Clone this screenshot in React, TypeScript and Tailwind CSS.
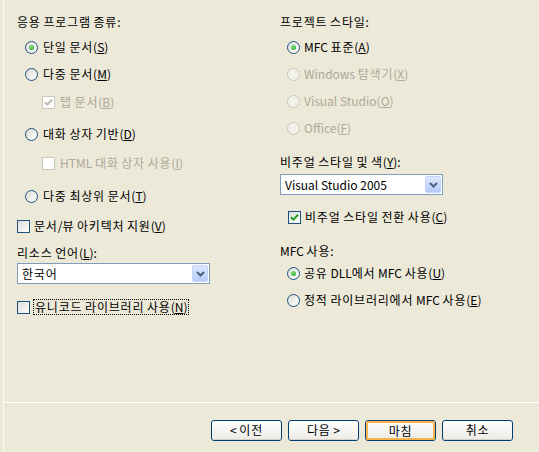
import React from "react";

const FONT = "font-['Noto_Sans_CJK_KR','Noto_Sans',sans-serif]";

// Hangul in the original font runs a little wider than Noto CJK, so loosen just those runs
function T({ s }: { s: string }) {
  const parts = s.split(/([\uAC00-\uD7A3]+)/);
  return (
    <span>
      {parts.map((p, i) =>
        /[\uAC00-\uD7A3]/.test(p) ? (
          <span key={i} className="tracking-[0.8px]">
            {p}
          </span>
        ) : (
          <React.Fragment key={i}>{p}</React.Fragment>
        )
      )}
    </span>
  );
}

function Mn({ label, k, suffix = "" }: { label: string; k: string; suffix?: string }) {
  return (
    <span>
      <T s={label} />(<span className="underline underline-offset-[1px]">{k}</span>){suffix}
    </span>
  );
}

function Radio({ checked = false, disabled = false }: { checked?: boolean; disabled?: boolean }) {
  return (
    <span
      className={
        "relative inline-flex w-[13px] h-[13px] shrink-0 items-center justify-center rounded-full border " +
        (disabled
          ? "border-[#CAC8BB] bg-[#F2F1EA]"
          : "border-[#1C5180] bg-gradient-to-br from-[#DCDCD7] to-white")
      }
    >
      {checked && (
        <span className="w-[5px] h-[5px] rounded-full bg-[radial-gradient(circle_at_40%_35%,#7CE37C,#21A121)]" />
      )}
    </span>
  );
}

function Check({ checked = false, disabled = false }: { checked?: boolean; disabled?: boolean }) {
  return (
    <span
      className={
        "inline-flex w-[13px] h-[13px] shrink-0 items-center justify-center border " +
        (disabled
          ? "border-[#CAC8BB] bg-white"
          : "border-[#1C5180] bg-gradient-to-br from-[#DCDCD7] to-white")
      }
    >
      {checked && (
        <svg width="9" height="9" viewBox="0 0 9 9">
          <path
            d="M1 4.2 L3.4 6.6 L8 1.8"
            fill="none"
            stroke={disabled ? "#BEBBAE" : "#21A121"}
            strokeWidth="2"
          />
        </svg>
      )}
    </span>
  );
}

function Combo({ value, width }: { value: string; width: string }) {
  return (
    <div className={"flex h-[21px] items-center border border-[#7F9DB9] bg-white " + width}>
      <span className="flex-1 pl-[4px] text-[12px] leading-none text-black">
        <T s={value} />
      </span>
      <span className="mr-[1px] flex h-[17px] w-[16px] items-center justify-center rounded-[2px] border border-[#C3D3FD] bg-gradient-to-b from-[#DDE7FD] to-[#B6CBF7]">
        <svg width="9" height="6" viewBox="0 0 9 6">
          <path d="M1 1 L4.5 4.5 L8 1" fill="none" stroke="#4D6185" strokeWidth="2" />
        </svg>
      </span>
    </div>
  );
}

function Row({ mt, children, dim = false }: { mt: string; children: React.ReactNode; dim?: boolean }) {
  return (
    <div className={"flex h-[20px] items-center text-[12px] " + mt + (dim ? " text-[#ACA899]" : " text-black")}>
      {children}
    </div>
  );
}

function Btn({ label, def = false }: { label: string; def?: boolean }) {
  return (
    <button className="h-[21px] w-[71px] rounded-[3px] border border-[#003C74] bg-gradient-to-b from-white to-[#ECEBE6] p-0 text-[12px] leading-none text-black">
      <span
        className={
          "flex h-full w-full items-center justify-center rounded-[2px] " +
          (def ? "border-2 border-[#F8B34A]" : "border-b border-[#D6D0C5]")
        }
      >
        <T s={label} />
      </span>
    </button>
  );
}

export default function App() {
  return (
    <div className={"h-[452px] w-[539px] overflow-hidden bg-[#ECE9D8] pl-[3px] " + FONT}>
      <div className="h-full border-l border-[#FBFAF5]">
        <div className="flex h-[402px]">
          {/* Left column */}
          <div className="flex w-[263px] flex-col pl-[13px] pt-[12px]">
            <Row mt="mt-0"><T s="응용 프로그램 종류:" /></Row>
            <Row mt="mt-[5px] pl-[8px] gap-[5px]">
              <Radio checked />
              <Mn label="단일 문서" k="S" />
            </Row>
            <Row mt="mt-[7px] pl-[8px] gap-[5px]">
              <Radio />
              <Mn label="다중 문서" k="M" />
            </Row>
            <Row mt="mt-[8px] pl-[25px] gap-[5px]" dim>
              <Check checked disabled />
              <Mn label="탭 문서" k="B" />
            </Row>
            <Row mt="mt-[12px] pl-[8px] gap-[5px]">
              <Radio />
              <Mn label="대화 상자 기반" k="D" />
            </Row>
            <Row mt="mt-[9px] pl-[25px] gap-[5px]" dim>
              <Check disabled />
              <Mn label="HTML 대화 상자 사용" k="I" />
            </Row>
            <Row mt="mt-[13px] pl-[8px] gap-[5px]">
              <Radio />
              <Mn label="다중 최상위 문서" k="T" />
            </Row>
            <Row mt="mt-[10px] gap-[4px]">
              <Check />
              <Mn label="문서/뷰 아키텍처 지원" k="V" />
            </Row>
            <Row mt="mt-[7px]">
              <Mn label="리소스 언어" k="L" suffix=":" />
            </Row>
            <div className="mt-0">
              <Combo value="한국어" width="w-[193px]" />
            </div>
            <Row mt="mt-[13px] gap-[3px]">
              <Check />
              <span className="border border-dotted border-black px-[1px] leading-[14px]">
                <Mn label="유니코드 라이브러리 사용" k="N" />
              </span>
            </Row>
          </div>

          {/* Right column */}
          <div className="flex flex-1 flex-col pl-[13px] pt-[12px]">
            <Row mt="mt-0"><T s="프로젝트 스타일:" /></Row>
            <Row mt="mt-[5px] pl-[7px] gap-[4px]">
              <Radio checked />
              <Mn label="MFC 표준" k="A" />
            </Row>
            <Row mt="mt-[7px] pl-[7px] gap-[4px]" dim>
              <Radio disabled />
              <Mn label="Windows 탐색기" k="X" />
            </Row>
            <Row mt="mt-[7px] pl-[7px] gap-[4px]" dim>
              <Radio disabled />
              <Mn label="Visual Studio" k="O" />
            </Row>
            <Row mt="mt-[7px] pl-[7px] gap-[4px]" dim>
              <Radio disabled />
              <Mn label="Office" k="F" />
            </Row>
            <Row mt="mt-[14px]">
              <Mn label="비주얼 스타일 및 색" k="Y" suffix=":" />
            </Row>
            <div className="mt-[2px]">
              <Combo value="Visual Studio 2005" width="w-[163px]" />
            </div>
            <Row mt="mt-[12px] pl-[8px] gap-[4px]">
              <Check checked />
              <Mn label="비주얼 스타일 전환 사용" k="C" />
            </Row>
            <Row mt="mt-[14px]"><T s="MFC 사용:" /></Row>
            <Row mt="mt-[2px] pl-[7px] gap-[4px]">
              <Radio checked />
              <Mn label="공유 DLL에서 MFC 사용" k="U" />
            </Row>
            <Row mt="mt-[7px] pl-[7px] gap-[4px]">
              <Radio />
              <Mn label="정적 라이브러리에서 MFC 사용" k="E" />
            </Row>
          </div>
        </div>

        {/* Separator */}
        <div className="h-px bg-white" />

        {/* Buttons */}
        <div className="flex justify-end gap-[6px] pr-[26px] pt-[17px]">
          <Btn label="< 이전" />
          <Btn label="다음 >" />
          <Btn label="마침" def />
          <Btn label="취소" />
        </div>
      </div>
    </div>
  );
}
